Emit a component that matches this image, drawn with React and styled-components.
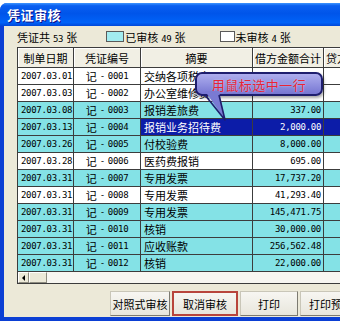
import React from "react";
import styled, { createGlobalStyle } from "styled-components";

const GlobalStyle = createGlobalStyle`
  html, body {
    margin: 0;
    padding: 0;
    background: #ffffff;
    overflow: hidden;
  }
  body {
    font-family: "Noto Sans CJK SC", "DejaVu Sans", sans-serif;
    font-size: 11px;
    color: #000;
  }
`;

const COLS = "56px 67px 112px 71px 71px 71px";
const CYAN = "#84e2e6";
const PICK = "#0c1ca8";
const LINE = "#3c3c3c";

const Window = styled.div`
  position: relative;
  width: 430px;
  margin-top: 3px;
  padding-bottom: 4px;
  background: #0b3fd4;
  border-radius: 7px 7px 0 0;
`;

const TitleBar = styled.div`
  height: 23px;
  display: flex;
  align-items: center;
  padding-left: 7px;
  border-radius: 7px 7px 0 0;
  color: #fff;
  font-size: 13px;
  font-weight: bold;
  letter-spacing: 0.5px;
  text-shadow: 1px 1px #0f1089;
  background: linear-gradient(
    to bottom,
    #3d95ff 0%,
    #0a5ff0 12%,
    #0055ea 45%,
    #0062f8 85%,
    #0047d8 100%
  );
`;

const Client = styled.div`
  margin-left: 4px;
  padding: 0 0 1px 13px;
  background: #ece9d8;
  display: flex;
  flex-direction: column;
`;

const StatusBar = styled.div`
  height: 21px;
  display: flex;
  align-items: center;
  white-space: nowrap;
`;

const StatusText = styled.span`
  margin-right: ${(p) => p.$gap}px;
`;

const Num = styled.span`
  font-family: "DejaVu Sans Mono", monospace;
  font-size: 9px;
  letter-spacing: -0.3px;
  padding: 0 ${(p) => (p.$pad ? 3 : 0)}px;
`;

const Swatch = styled.span`
  display: inline-block;
  box-sizing: border-box;
  width: ${(p) => p.$w}px;
  height: 11px;
  margin-right: 1px;
  border: 1px solid #5a5a5a;
  background: ${(p) => p.$color};
`;

const TableFrame = styled.div`
  border-top: 1px solid ${LINE};
  border-left: 1px solid ${LINE};
  border-bottom: 1px solid ${LINE};
  background: #fff;
`;

const HeadRow = styled.div`
  display: grid;
  grid-template-columns: ${COLS};
  height: 20px;
`;

const HeadCell = styled.div`
  display: flex;
  align-items: center;
  justify-content: center;
  white-space: nowrap;
  overflow: hidden;
  background: #f1efe4;
  border-right: 1px solid ${LINE};
  border-bottom: 1px solid ${LINE};
  box-shadow: inset 1px 1px #ffffff;
`;

const Row = styled.div`
  display: grid;
  grid-template-columns: ${COLS};
  height: 17px;
  background: ${(p) => (p.$done ? CYAN : "#ffffff")};
`;

const Cell = styled.div`
  display: flex;
  align-items: center;
  justify-content: ${(p) =>
    p.$align === "right" ? "flex-end" : p.$align === "center" ? "center" : "flex-start"};
  padding: 0 ${(p) => (p.$align === "right" ? 2 : 3)}px;
  white-space: nowrap;
  overflow: hidden;
  border-right: 1px solid ${LINE};
  border-bottom: 1px solid ${LINE};
  background: ${(p) => (p.$hl ? PICK : "transparent")};
  color: ${(p) => (p.$hl ? "#ffffff" : "#000000")};
`;

const HScroll = styled.div`
  height: 11px;
  display: flex;
  background: #f7f6f1;
`;

const ScrollPart = styled.div`
  box-sizing: border-box;
  width: ${(p) => p.$w}px;
  height: 11px;
  display: flex;
  align-items: center;
  justify-content: center;
  background: #ece9d8;
  border-top: 1px solid #fff;
  border-left: 1px solid #fff;
  border-right: 1px solid #8e8c80;
  border-bottom: 1px solid #8e8c80;
`;

const LeftArrow = styled.span`
  width: 0;
  height: 0;
  border-top: 3px solid transparent;
  border-bottom: 3px solid transparent;
  border-right: 3px solid #000;
`;

const ButtonRow = styled.div`
  display: flex;
  gap: 2px;
  margin-top: 7px;
  padding-left: 93px;
`;

const Button = styled.div`
  box-sizing: border-box;
  width: ${(p) => p.$w}px;
  height: 25px;
  display: flex;
  align-items: center;
  justify-content: center;
  white-space: nowrap;
  background: linear-gradient(to bottom, #f7f6f2, #e8e6dc);
  border: ${(p) => (p.$focus ? "2px solid #b8453c" : "1px solid #c9c6b8")};
  border-right-color: ${(p) => (p.$focus ? "#b8453c" : "#7c7a70")};
  border-bottom-color: ${(p) => (p.$focus ? "#b8453c" : "#7c7a70")};
`;

const Callout = styled.div`
  position: absolute;
  left: 195px;
  top: 69px;
  box-sizing: border-box;
  width: 128px;
  height: 24px;
  display: flex;
  align-items: center;
  justify-content: center;
  border: 2px solid #1e1e6e;
  border-radius: 7px;
  background: linear-gradient(to bottom, #aeaeee, #7676d2);
  box-shadow: 1px 2px 3px rgba(0, 0, 0, 0.35);
  color: #e82436;
  font-size: 13px;
  letter-spacing: 0.5px;
  text-shadow: 0 0 2px rgba(255, 255, 255, 0.5);
`;

const Tail = styled.svg`
  position: absolute;
  left: 200px;
  top: 86px;
`;

const rows = [
  { date: "2007.03.01", no: "0001", memo: "交纳各项税金", amt: "", done: false },
  { date: "2007.03.03", no: "0002", memo: "办公室维修费", amt: "", done: false },
  { date: "2007.03.08", no: "0003", memo: "报销差旅费", amt: "337.00", done: true },
  { date: "2007.03.13", no: "0004", memo: "报销业务招待费", amt: "2,000.00", done: true, pick: true },
  { date: "2007.03.26", no: "0005", memo: "付校验费", amt: "8,000.00", done: true },
  { date: "2007.03.28", no: "0006", memo: "医药费报销", amt: "695.00", done: false },
  { date: "2007.03.31", no: "0007", memo: "专用发票", amt: "17,737.20", done: true },
  { date: "2007.03.31", no: "0008", memo: "专用发票", amt: "41,293.40", done: false },
  { date: "2007.03.31", no: "0009", memo: "专用发票", amt: "145,471.75", done: true },
  { date: "2007.03.31", no: "0010", memo: "核销", amt: "30,000.00", done: true },
  { date: "2007.03.31", no: "0011", memo: "应收账款", amt: "256,562.48", done: true },
  { date: "2007.03.31", no: "0012", memo: "核销", amt: "22,000.00", done: true },
];

export default function App() {
  return (
    <>
      <GlobalStyle />
      <Window>
        <TitleBar>凭证审核</TitleBar>
        <Client>
          <StatusBar>
            <StatusText $gap={29}>
              凭证共<Num $pad>53</Num>张
            </StatusText>
            <Swatch $w={18} $color="#a2ecf0" />
            <StatusText $gap={34}>
              已审核<Num $pad>49</Num>张
            </StatusText>
            <Swatch $w={15} $color="#ffffff" />
            <StatusText $gap={0}>
              未审核<Num $pad>4</Num>张
            </StatusText>
          </StatusBar>

          <TableFrame>
            <HeadRow>
              <HeadCell>制单日期</HeadCell>
              <HeadCell>凭证编号</HeadCell>
              <HeadCell>摘要</HeadCell>
              <HeadCell>借方金额合计</HeadCell>
              <HeadCell>贷方金额合计</HeadCell>
              <HeadCell>制单人</HeadCell>
            </HeadRow>
            {rows.map((r) => (
              <Row key={r.no} $done={r.done}>
                <Cell>
                  <Num>{r.date}</Num>
                </Cell>
                <Cell $align="center">
                  记<Num $pad>-</Num>
                  <Num>{r.no}</Num>
                </Cell>
                <Cell $hl={r.pick}>{r.memo}</Cell>
                <Cell $hl={r.pick} $align="right">
                  <Num>{r.amt}</Num>
                </Cell>
                <Cell $hl={r.pick} />
                <Cell $hl={r.pick} />
              </Row>
            ))}
            <HScroll>
              <ScrollPart $w={11}>
                <LeftArrow />
              </ScrollPart>
              <ScrollPart $w={18} />
            </HScroll>
          </TableFrame>

          <ButtonRow>
            <Button $w={60}>对照式审核</Button>
            <Button $w={66} $focus>
              取消审核
            </Button>
            <Button $w={58}>打印</Button>
            <Button $w={62}>打印预览</Button>
          </ButtonRow>
        </Client>

        <Callout>用鼠标选中一行</Callout>
        <Tail width="30" height="34" viewBox="0 0 30 34">
          <polygon points="5,2 19,2 25,31" fill="#7a7ad3" />
          <polyline
            points="5,6 25,31 19,6"
            fill="none"
            stroke="#1e1e6e"
            strokeWidth="1.6"
            strokeLinejoin="round"
          />
        </Tail>
      </Window>
    </>
  );
}
